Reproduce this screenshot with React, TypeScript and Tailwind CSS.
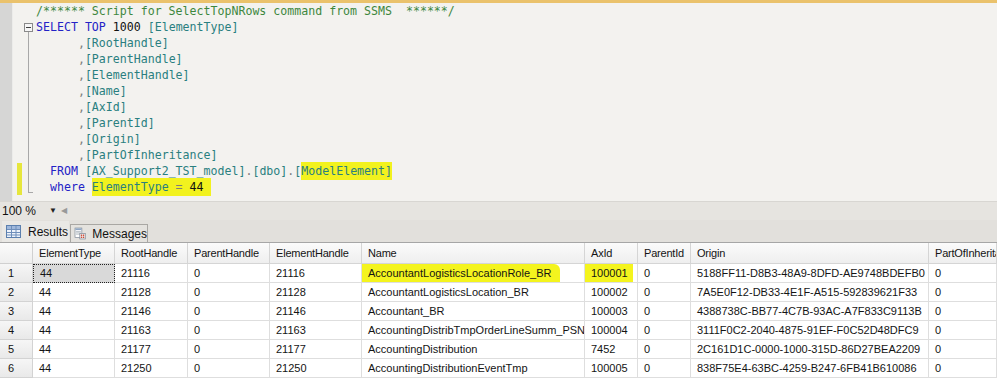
import React from "react";

type Tok = [string, string, boolean?];

const KW = "text-[#2323c6]";
const ID = "text-[#2a7f80]";
const GR = "text-[#7d7d7d]";
const CM = "text-[#3d873d]";
const BK = "text-[#111111]";

const cols = ["ElementType", "RootHandle", "ParentHandle", "ElementHandle", "Name", "AxId", "ParentId", "Origin", "PartOfInheritance"];

const rows: string[][] = [
  ["44", "21116", "0", "21116", "AccountantLogisticsLocationRole_BR", "100001", "0", "5188FF11-D8B3-48A9-8DFD-AE9748BDEFB0", "0"],
  ["44", "21128", "0", "21128", "AccountantLogisticsLocation_BR", "100002", "0", "7A5E0F12-DB33-4E1F-A515-592839621F33", "0"],
  ["44", "21146", "0", "21146", "Accountant_BR", "100003", "0", "4388738C-BB77-4C7B-93AC-A7F833C9113B", "0"],
  ["44", "21163", "0", "21163", "AccountingDistribTmpOrderLineSumm_PSN", "100004", "0", "3111F0C2-2040-4875-91EF-F0C52D48DFC9", "0"],
  ["44", "21177", "0", "21177", "AccountingDistribution", "7452", "0", "2C161D1C-0000-1000-315D-86D27BEA2209", "0"],
  ["44", "21250", "0", "21250", "AccountingDistributionEventTmp", "100005", "0", "838F75E4-63BC-4259-B247-6FB41B610086", "0"],
];

const fieldLine = (name: string): Tok[] => [[BK, "      "], [GR, ","], [ID, `[${name}]`]];

const lines: Tok[][] = [
  [[CM, "/****** Script for SelectTopNRows command from SSMS  ******/"]],
  [[KW, "SELECT"], [BK, " "], [KW, "TOP"], [BK, " "], [BK, "1000"], [BK, " "], [ID, "[ElementType]"]],
  fieldLine("RootHandle"),
  fieldLine("ParentHandle"),
  fieldLine("ElementHandle"),
  fieldLine("Name"),
  fieldLine("AxId"),
  fieldLine("ParentId"),
  fieldLine("Origin"),
  fieldLine("PartOfInheritance"),
  [[BK, "  "], [KW, "FROM"], [BK, " "], [ID, "[AX_Support2_TST_model]"], [GR, "."], [ID, "[dbo]"], [GR, "."], [ID, "["], [ID, "ModelElement]", true]],
  [[BK, "  "], [KW, "where"], [BK, " "], [ID, "ElementType", true], [GR, " = ", true], [BK, "44 ", true]],
];

function Margin({ i }: { i: number }) {
  const changed = i >= 10;
  let outline: React.ReactNode = null;
  if (i === 1) {
    outline = (
      <div className="flex h-full flex-col items-center">
        <div className="h-[4px]" />
        <div className="flex h-[9px] w-[9px] items-center justify-center border border-[#8a8a8a] bg-[#f6f6f6]">
          <div className="h-px w-[5px] bg-[#404040]" />
        </div>
        <div className="w-px flex-1 bg-[#a8a8a8]" />
      </div>
    );
  } else if (i > 1 && i < 11) {
    outline = <div className="ml-[4px] h-full w-[5px] border-l border-[#a8a8a8]" />;
  } else if (i === 11) {
    outline = <div className="ml-[4px] h-[14px] w-[5px] border-b border-l border-[#a8a8a8]" />;
  }
  return (
    <div className="flex h-[16px] w-[23px] shrink-0">
      <div className="w-[4px]" />
      <div className={`w-[5px] ${changed ? "bg-[#e6e63c]" : ""}`} />
      <div className="w-[2px]" />
      <div className="h-[16px] w-[9px]">{outline}</div>
    </div>
  );
}

function GridIcon() {
  return (
    <svg width="15" height="13" viewBox="0 0 15 13">
      <rect x="0.5" y="0.5" width="14" height="12" fill="#eef3fb" stroke="#5b7fae" />
      <rect x="1" y="1" width="13" height="3" fill="#9fb8dc" />
      <line x1="5.5" y1="1" x2="5.5" y2="12" stroke="#6f8fbb" />
      <line x1="10" y1="1" x2="10" y2="12" stroke="#6f8fbb" />
      <line x1="1" y1="4.5" x2="14" y2="4.5" stroke="#6f8fbb" />
      <line x1="1" y1="7.5" x2="14" y2="7.5" stroke="#6f8fbb" />
      <line x1="1" y1="10" x2="14" y2="10" stroke="#6f8fbb" />
    </svg>
  );
}

function MsgIcon() {
  return (
    <svg width="18" height="17" viewBox="0 0 18 17">
      <rect x="1.5" y="0.5" width="10" height="14" fill="#ffffff" stroke="#7a8593" />
      <rect x="2" y="1" width="9" height="2.5" fill="#8fa6c4" />
      <line x1="3" y1="5.5" x2="10" y2="5.5" stroke="#9aa3ad" />
      <line x1="3" y1="7.5" x2="10" y2="7.5" stroke="#9aa3ad" />
      <line x1="3" y1="9.5" x2="10" y2="9.5" stroke="#9aa3ad" />
      <rect x="8.5" y="8.5" width="8" height="8" fill="#f4f4f4" stroke="#7a8593" />
      <rect x="10" y="10" width="2" height="2" fill="#c8402a" />
      <rect x="13" y="10" width="2" height="2" fill="#c8402a" />
      <rect x="10" y="13" width="2" height="2" fill="#c8402a" />
      <rect x="13" y="13" width="2" height="2" fill="#c8402a" />
    </svg>
  );
}

const gridCols = "grid grid-cols-[33px_82px_73px_82px_92px_223px_53px_53px_238px_1fr]";

export default function App() {
  return (
    <div className="flex h-[381px] w-[997px] flex-col overflow-hidden bg-[#f3f2ef]" style={{ fontFamily: '"Liberation Sans", Arial, sans-serif' }}>
      <div className="h-[3px] shrink-0 bg-[#eac26c]" />
      {/* Editor */}
      <div className="flex h-[198px] shrink-0">
        <div className="w-[12px] shrink-0 bg-[#d6d6d5]" />
        <div className="w-px shrink-0 bg-[#ececea]" />
        <div className="flex flex-1 flex-col" style={{ fontFamily: '"DejaVu Sans Mono", "Liberation Mono", monospace' }}>
          {lines.map((toks, i) => (
            <div key={i} className="flex h-[16px]">
              <Margin i={i} />
              <div className="whitespace-pre text-[11.6px] leading-[16px]">
                {toks.map(([c, t, hl], j) =>
                  hl ? (
                    <span key={j} className={`${c} bg-[#f2f21e] py-[2px]`}>{t}</span>
                  ) : (
                    <span key={j} className={c}>{t}</span>
                  )
                )}
              </div>
            </div>
          ))}
        </div>
      </div>
      {/* Zoom strip */}
      <div className="flex h-[19px] shrink-0 items-center border-t border-[#d8d6d2] bg-[#e6e4e0] pl-[2px] text-[12px] text-[#111]">
        <span className="w-[47px]">100 %</span>
        <span className="w-[12px] text-[8px] text-[#222]">▼</span>
        <span className="text-[8px] text-[#999]">◀</span>
      </div>
      {/* Tabs */}
      <div className="flex h-[22px] shrink-0 items-end bg-[#e2e0dc] pl-[2px] text-[12px] text-[#111]">
        <div className="flex h-[21px] w-[67px] items-center gap-[7px] bg-[#e9e8e5] pl-[4px]">
          <GridIcon />
          <span>Results</span>
        </div>
        <div className="ml-[1px] flex h-[18px] w-[78px] items-center gap-[6px] border border-b-0 border-[#a9a7a3] bg-[#e4e2de] pl-[3px]">
          <MsgIcon />
          <span>Messages</span>
        </div>
      </div>
      {/* Grid */}
      <div className="flex-1 border-t border-[#a6a6a6] bg-[#ffffff] text-[11px] text-[#141414]">
        <div className={`${gridCols} h-[21px] bg-gradient-to-b from-[#fbfbfb] to-[#eeeeee]`}>
          <div className="border-b border-r border-[#d0d0d0]" />
          {cols.map((c) => (
            <div key={c} className="flex items-center overflow-hidden whitespace-nowrap border-b border-r border-[#d5d5d5] pl-[6px] tracking-[-0.2px]">
              {c}
            </div>
          ))}
        </div>
        {rows.map((r, ri) => (
          <div key={ri} className={`${gridCols} h-[19px]`}>
            <div className="flex items-center border-b border-r border-[#d3d3d3] bg-gradient-to-b from-[#f6f6f6] to-[#e9e9e9] pl-[8px] text-[11px]">
              {ri + 1}
            </div>
            {r.map((v, ci) => {
              const sel = ri === 0 && ci === 0;
              const hl = ri === 0 && (ci === 4 || ci === 5);
              return (
                <div
                  key={ci}
                  className={`flex items-center overflow-hidden whitespace-nowrap pl-[6px] text-[11px] ${
                    sel ? "border border-dotted border-[#222] bg-[#d9d9d9]" : "border-b border-r border-[#dedede]"
                  }`}
                >
                  {hl ? (
                    <span className={`-ml-[6px] flex h-[18px] items-center bg-[#f4f41e] pl-[6px] ${ci === 4 ? "w-[198px] rounded-tr-[6px]" : "w-[48px]"}`}>{v}</span>
                  ) : (
                    v
                  )}
                </div>
              );
            })}
          </div>
        ))}
      </div>
    </div>
  );
}
